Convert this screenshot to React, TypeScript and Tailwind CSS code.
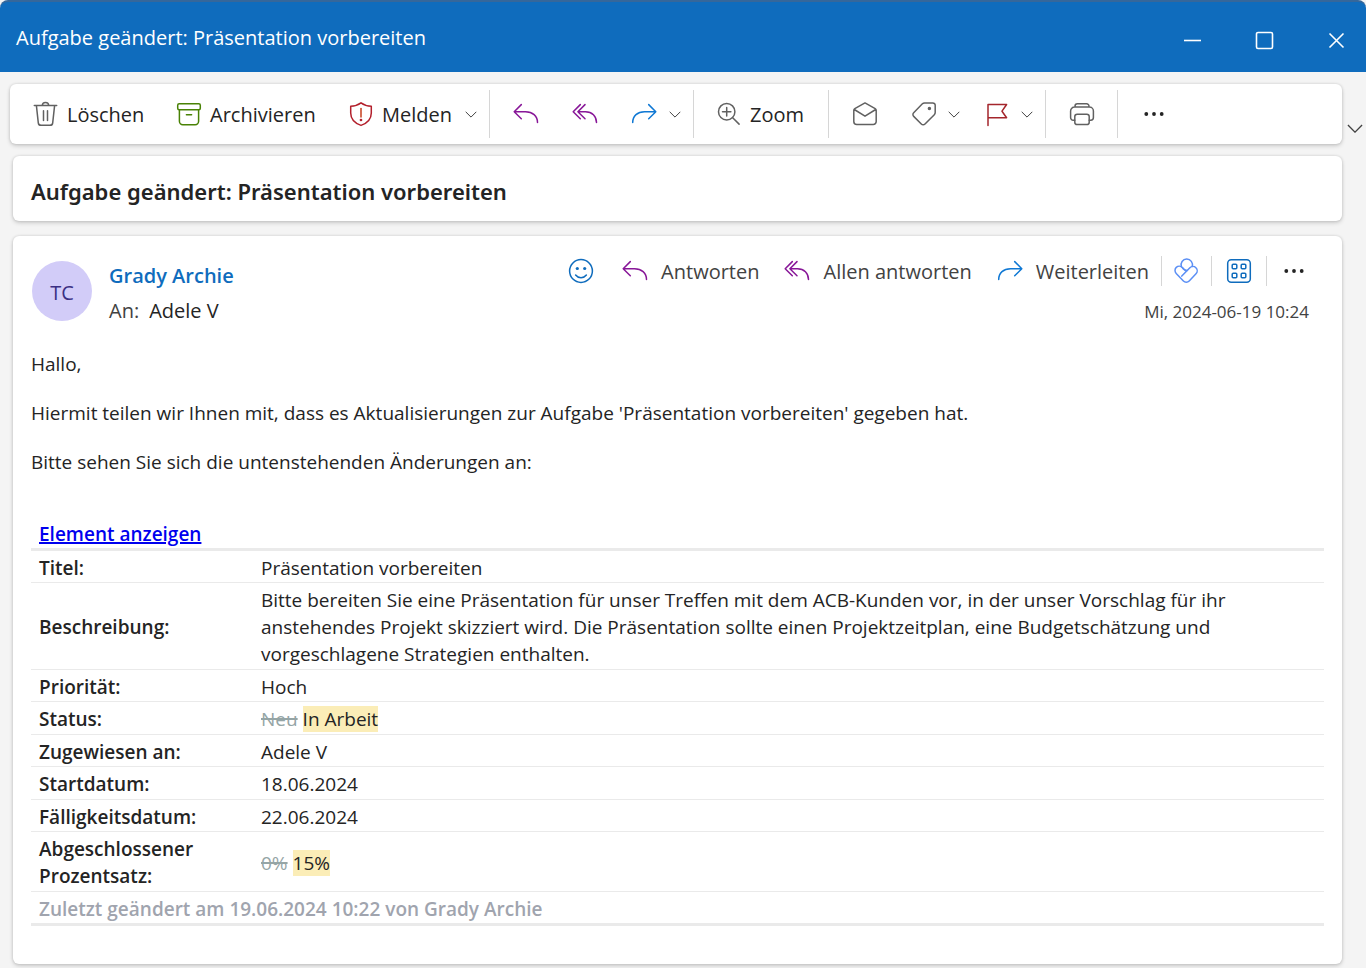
import React from "react";

type IconProps = { children: React.ReactNode; color?: string };

function Icon({ children, color = "text-[#616161]" }: IconProps) {
  return (
    <svg
      viewBox="0 0 26 26"
      className={`size-[26px] ${color} shrink-0`}
      fill="none"
      stroke="currentColor"
      strokeWidth={1.5}
      strokeLinecap="round"
      strokeLinejoin="round"
      aria-hidden="true"
    >
      {children}
    </svg>
  );
}

const Trash = () => (
  <Icon>
    <path d="M1.3 4.6h22.4M9.3 4.6a3.2 3.2 0 0 1 6.4 0M3.4 4.6l1.9 17.2a2.8 2.8 0 0 0 2.8 2.5h8.8a2.8 2.8 0 0 0 2.8-2.5l1.9-17.2M10.5 9.8v9.8M14.5 9.8v9.8" />
  </Icon>
);
const Archive = () => (
  <Icon color="text-[#498205]">
    <rect x="1.7" y="2.7" width="22.6" height="6" rx="1.5" />
    <path d="M3.4 8.7v11.6a3.4 3.4 0 0 0 3.4 3.4h12.4a3.4 3.4 0 0 0 3.4-3.4V8.7M10.4 13.7h5.2" />
  </Icon>
);
const Shield = () => (
  <Icon color="text-[#b3202c]">
    <path d="M13 1.8C10 4 6.7 5 2.7 5.2V12c0 5.9 3.6 10 10.3 12.4C19.7 22 23.3 17.9 23.3 12V5.2C19.3 5 16 4 13 1.8z" />
    <path d="M13 7.5v8.5" stroke="#c43e1c" />
    <circle cx="13" cy="19" r="0.6" fill="currentColor" />
  </Icon>
);
const Reply = () => (
  <Icon color="text-[#881798]">
    <path d="M8.3 3.6L1.2 10.7l7.1 7.1M1.2 10.7H12.5C19.5 10.7 24.5 15 24.5 21.5" />
  </Icon>
);
const ReplyAll = () => (
  <Icon color="text-[#881798]">
    <path d="M8.3 3.6L1.2 10.7l7.1 7.1M13 3.6L5.9 10.7l7.1 7.1M5.9 10.7H13.5C20 10.7 24.5 15 24.5 21.5" />
  </Icon>
);
const Forward = () => (
  <Icon color="text-[#0f78d4]">
    <path d="M17.7 3.6l7.1 7.1-7.1 7.1M24.8 10.7H13.5C6.5 10.7 1.7 15 1.7 21.5" />
  </Icon>
);
const ZoomIn = () => (
  <Icon>
    <circle cx="10.7" cy="10.7" r="8.2" />
    <path d="M16.7 16.7l6.4 6.4M10.7 6.5v8.4M6.5 10.7h8.4" />
  </Icon>
);
const Mail = () => (
  <Icon>
    <path d="M1.8 9.3a2 2 0 0 1 1-1.7L13 1.9l10.2 5.7a2 2 0 0 1 1 1.7v11.2a3 3 0 0 1-3 3H4.8a3 3 0 0 1-3-3zM2.3 8.5L13 15.2l10.7-6.7" />
  </Icon>
);
const Tag = () => (
  <Icon>
    <path d="M13.5 1.9h8.3a2.4 2.4 0 0 1 2.4 2.4v7.3a3 3 0 0 1-.9 2.1l-9.3 9.3a2.6 2.6 0 0 1-3.7 0l-7.6-7.6a2.6 2.6 0 0 1 0-3.7l8.7-8.9a3 3 0 0 1 2.1-.9z" />
    <circle cx="18.4" cy="7.5" r="1" fill="currentColor" />
  </Icon>
);
const Flag = () => (
  <Icon color="text-[#a4262c]">
    <path d="M3 24.5V3.5h18.6l-4.6 6.7 4.6 6.5H3" />
  </Icon>
);
const Printer = () => (
  <Icon>
    <path d="M5.8 19.2H4.2a2.6 2.6 0 0 1-2.6-2.6V10a4 4 0 0 1 4-4h14.8a4 4 0 0 1 4 4v6.6a2.6 2.6 0 0 1-2.6 2.6h-1.6M6 6V5.2a2.4 2.4 0 0 1 2.4-2.4h9.2A2.4 2.4 0 0 1 20 5.2V6" />
    <rect x="5.8" y="13.2" width="14.4" height="10.4" rx="2.4" />
  </Icon>
);
const Dots = () => (
  <Icon color="text-[#242424]">
    <g fill="currentColor" stroke="none">
      <circle cx="5.3" cy="13" r="1.9" />
      <circle cx="13" cy="13" r="1.9" />
      <circle cx="20.7" cy="13" r="1.9" />
    </g>
  </Icon>
);
const Smile = () => (
  <Icon color="text-[#0f6cbd]">
    <circle cx="13" cy="13" r="11.4" />
    <path d="M7.6 17c2.8 3.6 8 3.6 10.8 0" />
    <g fill="currentColor" stroke="none">
      <circle cx="9.3" cy="10.5" r="1.6" />
      <circle cx="16.7" cy="10.5" r="1.6" />
    </g>
  </Icon>
);
const Loop = () => (
  <Icon color="text-[#5b8ff5]">
    <path d="M8.4 8.7A5.7 5.7 0 1 1 19.2 8.5" />
    <path d="M13 13.3L9.3 9.5A4.2 4.2 0 0 0 3.2 15.4L10.4 23a4 4 0 0 0 5.8 0L23 15.7a4.2 4.2 0 0 0-6.1-5.900L8.8 18.1" />
    <path d="M9.3 9.5c1 2 2.5 3 5.1 2.9" />
  </Icon>
);
const Apps = () => (
  <Icon color="text-[#0f6cbd]">
    <rect x="1.7" y="1.7" width="22.6" height="22.6" rx="3.5" />
    <rect x="6.2" y="6.2" width="4.6" height="4.6" rx="1" />
    <rect x="15.2" y="6.2" width="4.6" height="4.6" rx="1" />
    <rect x="6.2" y="15.2" width="4.6" height="4.6" rx="1" />
    <rect x="15.2" y="15.2" width="4.6" height="4.6" rx="1" />
  </Icon>
);

function Chevron({ size = "w-3" }: { size?: string }) {
  return (
    <svg viewBox="0 0 12 7" className={`${size} shrink-0 text-[#424242]`} fill="none" stroke="currentColor" strokeWidth={1} aria-hidden="true">
      <path d="M0.7 0.8L6 6.1 11.3 0.8" />
    </svg>
  );
}

type ToolProps = {
  icon: React.ReactNode;
  label?: string;
  name?: string;
  gap?: string;
  color?: string;
  className?: string;
};

function Tool({ icon, label, name, gap = "gap-2", color = "text-[#242424]", className = "" }: ToolProps) {
  return (
    <button type="button" aria-label={label ?? name} className={`flex shrink-0 items-center text-[20px] leading-7 whitespace-nowrap ${gap} ${color} ${className}`}>
      {icon}
      {label && <span className="pt-0.5">{label}</span>}
    </button>
  );
}

function Drop({ name, className = "" }: { name: string; className?: string }) {
  return (
    <button type="button" aria-label={name} className={`flex h-6 w-3 items-center ${className}`}>
      <Chevron />
    </button>
  );
}

const Rule = ({ className = "" }: { className?: string }) => <div className={`w-px shrink-0 bg-[#d6d6d6] ${className}`} />;

const changed = (before: string, after: string) => (
  <>
    <s className="text-[#95a5a6] decoration-2">{before}</s> <mark className="bg-[#fbedb7] text-[#242424]">{after}</mark>
  </>
);

const rows: { label: string; value: React.ReactNode }[] = [
  { label: "Titel:", value: "Präsentation vorbereiten" },
  {
    label: "Beschreibung:",
    value:
      "Bitte bereiten Sie eine Präsentation für unser Treffen mit dem ACB-Kunden vor, in der unser Vorschlag für ihr anstehendes Projekt skizziert wird. Die Präsentation sollte einen Projektzeitplan, eine Budgetschätzung und vorgeschlagene Strategien enthalten.",
  },
  { label: "Priorität:", value: "Hoch" },
  { label: "Status:", value: changed("Neu", "In Arbeit") },
  { label: "Zugewiesen an:", value: "Adele V" },
  { label: "Startdatum:", value: "18.06.2024" },
  { label: "Fälligkeitsdatum:", value: "22.06.2024" },
  { label: "Abgeschlossener Prozentsatz:", value: changed("0%", "15%") },
];

const windowControls = [
  { name: "Minimieren", d: "M1 9.5h17" },
  { name: "Maximieren", d: "M3 1.5h13a1.5 1.5 0 0 1 1.5 1.5v13a1.5 1.5 0 0 1-1.5 1.5H3a1.5 1.5 0 0 1-1.5-1.5V3A1.5 1.5 0 0 1 3 1.5z" },
  { name: "Schließen", d: "M2.5 2.5l14 14M16.5 2.5l-14 14" },
];

const card = "rounded-md bg-white shadow-[0_0_3px_rgba(0,0,0,0.14),0_2px_4px_rgba(0,0,0,0.16)]";

export default function App() {
  return (
    <div className="flex min-h-screen flex-col bg-[#f4f4f4] font-['Open_Sans','Noto_Sans',sans-serif] text-[#242424]">
      <header className="flex h-[72px] items-center justify-between rounded-t-lg border-t-2 border-[#35679b] bg-[#0f6cbd] pl-4 text-white">
        <span className="pt-0.5 text-[20px] leading-7">Aufgabe geändert: Präsentation vorbereiten</span>
        <div className="flex pt-1.5">
          {windowControls.map(({ name, d }) => (
            <button key={name} type="button" aria-label={name} className="flex h-10 w-[72px] items-center justify-center last:w-[66px] last:pl-1.5">
              <svg viewBox="0 0 19 19" className="size-[19px]" fill="none" stroke="currentColor" strokeWidth={1.6} aria-hidden="true">
                <path d={d} />
              </svg>
            </button>
          ))}
        </div>
      </header>

      <div className="flex pt-3 pl-[10px]">
        <div role="toolbar" aria-label="Nachrichtenaktionen" className={`${card} flex h-[60px] min-w-0 flex-1 items-center pl-[23px]`}>
          <Tool icon={<Trash />} label="Löschen" className="w-[143px]" />
          <Tool icon={<Archive />} label="Archivieren" className="w-[172px]" />
          <Tool icon={<Shield />} label="Melden" className="w-[117px]" />
          <Drop name="Meldeoptionen" className="mr-3" />
          <Rule className="h-12" />
          <Tool icon={<Reply />} name="Antworten" className="ml-[23px]" />
          <Tool icon={<ReplyAll />} name="Allen antworten" className="ml-[33px]" />
          <Tool icon={<Forward />} name="Weiterleiten" className="ml-[33px]" />
          <Drop name="Weiterleitungsoptionen" className="mr-3 ml-3" />
          <Rule className="h-12" />
          <Tool icon={<ZoomIn />} label="Zoom" className="ml-[22px] w-28" />
          <Rule className="h-12" />
          <Tool icon={<Mail />} name="Als ungelesen markieren" className="ml-[23px]" />
          <Tool icon={<Tag />} name="Kategorisieren" className="ml-[33px]" />
          <Drop name="Kategorien" className="ml-[11px]" />
          <Tool icon={<Flag />} name="Kennzeichnen" className="ml-[25px]" />
          <Drop name="Kennzeichnungsoptionen" className="mr-3 ml-[10px]" />
          <Rule className="h-12" />
          <Tool icon={<Printer />} name="Drucken" className="ml-[23px]" />
          <Rule className="ml-[22px] h-12" />
          <Tool icon={<Dots />} name="Weitere Optionen" className="ml-[23px]" />
        </div>
        <button type="button" aria-label="Menüband anpassen" className="flex w-6 items-end justify-end pr-[3px] pb-[11px]">
          <Chevron size="w-4" />
        </button>
      </div>

      <main className="flex flex-1 flex-col pt-3 pr-6 pb-1 pl-[13px]">
        <h1 className={`${card} flex h-[65px] items-center pt-1 pl-[18px] font-['Noto_Sans','Open_Sans',sans-serif] text-[22px] leading-8 font-semibold`}>
          Aufgabe geändert: Präsentation vorbereiten
        </h1>

        <article className={`${card} mt-[15px] flex-1 px-[18px] pt-[22px]`}>
          <div className="flex items-start pl-px">
            <div className="mt-[3px] flex size-[60px] items-center justify-center rounded-full bg-[#d2ccf8] pt-1 text-[20px] font-medium text-[#3b2f83]">TC</div>
            <div className="ml-[17px]">
              <div className="text-[20px] leading-[35px] font-semibold text-[#0f6cbd]">Grady Archie</div>
              <div className="flex gap-[10px] text-[20px] leading-[35px]">
                <span className="text-[#424242]">An:</span>
                <span>Adele V</span>
              </div>
            </div>
            <div className="ml-auto">
              <div className="flex h-[26px] items-center justify-end">
                <Tool icon={<Smile />} name="Reagieren" />
                <Tool icon={<Reply />} label="Antworten" gap="gap-[13px]" color="text-[#424242]" className="ml-7" />
                <Tool icon={<ReplyAll />} label="Allen antworten" gap="gap-[13px]" color="text-[#424242]" className="ml-[25px]" />
                <Tool icon={<Forward />} label="Weiterleiten" gap="gap-[13px]" color="text-[#424242]" className="ml-[25px]" />
                <Rule className="ml-3 h-[30px]" />
                <Tool icon={<Loop />} name="Loop" className="ml-[11px]" />
                <Rule className="ml-3 h-[30px]" />
                <Tool icon={<Apps />} name="Apps" className="ml-[14px]" />
                <Rule className="ml-[14px] h-[30px]" />
                <Tool icon={<Dots />} name="Weitere Aktionen" className="mr-[17px] ml-[14px]" />
              </div>
              <div className="pt-4 pr-[15px] text-right text-[17px] leading-6 text-[#424242]">Mi, 2024-06-19 10:24</div>
            </div>
          </div>

          <div className="flex flex-col gap-[22px] pt-[23px] text-[19px] leading-[27px]">
            <p>Hallo,</p>
            <p>Hiermit teilen wir Ihnen mit, dass es Aktualisierungen zur Aufgabe 'Präsentation vorbereiten' gegeben hat.</p>
            <p>Bitte sehen Sie sich die untenstehenden Änderungen an:</p>
          </div>

          <table className="mt-[45px] w-full text-left text-[19px] leading-[27px]">
            <thead>
              <tr className="border-b-[3px] border-[#eaeaea]">
                <th colSpan={2} className="px-2 font-semibold">
                  <a href="#element" className="text-[#0000ee] underline decoration-2">Element anzeigen</a>
                </th>
              </tr>
            </thead>
            <tbody>
              {rows.map((row) => (
                <tr key={row.label} className="border-b border-[#eaeaea] *:pt-1 even:*:pb-px">
                  <th scope="row" className="w-[222px] px-2 font-semibold">{row.label}</th>
                  <td className="pr-20 pl-2">{row.value}</td>
                </tr>
              ))}
            </tbody>
            <tfoot>
              <tr className="border-b-[3px] border-[#eaeaea]">
                <td colSpan={2} className="px-2 pt-1 font-semibold text-[#a0a4ae]">Zuletzt geändert am 19.06.2024 10:22 von Grady Archie</td>
              </tr>
            </tfoot>
          </table>
        </article>
      </main>
    </div>
  );
}
